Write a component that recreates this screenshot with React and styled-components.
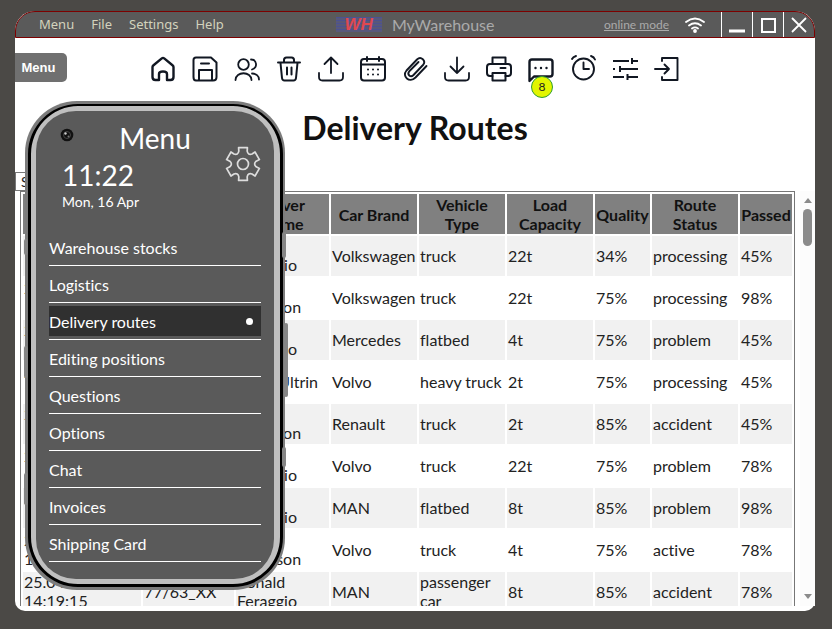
import React from 'react';
import styled, { createGlobalStyle } from 'styled-components';

const GlobalStyle = createGlobalStyle`
  *, *::before, *::after { box-sizing: border-box; }
  body {
    margin: 0;
    background: #4b4946;
    color: #222;
    font: 16px/19px Lato, sans-serif;
    font-variant-ligatures: none;
  }
  button { font: inherit; color: inherit; }
`;

const Desktop = styled.div`
  display: flex;
  height: 100vh;
  padding: 11px 17px 18px 15px;
`;

const Window = styled.main`
  position: relative;
  flex: 1;
  min-width: 0;
  display: flex;
  flex-direction: column;
  padding-bottom: 5px;
  background: #fff;
  border-radius: 20px 20px 10px 10px;
`;

const TitleBar = styled.header`
  display: grid;
  grid-template-columns: 1fr auto 1fr;
  align-items: center;
  height: 27px;
  flex: none;
  background: #5a5a5a;
  border: 1px solid #7d0000;
  border-radius: 20px 20px 0 0;
  overflow: hidden;
`;

const MenuBar = styled.nav`
  display: flex;
  gap: 17px;
  padding: 0 0 2px 23px;
`;

const MenuBarButton = styled.button`
  padding: 0;
  border: 0;
  background: none;
  color: #d3d3bd;
  font: 13px/20px "Noto Sans", sans-serif;
`;

const Brand = styled.div`
  display: flex;
  align-items: center;
  gap: 10px;
  color: #aaa;
`;

const TitleTools = styled.div`
  display: flex;
  align-items: center;
  justify-content: flex-end;
  height: 100%;
`;

const ModeLink = styled.a`
  margin-right: 16px;
  color: #aaa;
  font-size: 12px;
`;

const WifiIcon = styled.svg`
  width: 20px;
  height: 16px;
  margin-right: 16px;
`;

const WindowButton = styled.button`
  display: grid;
  place-items: center;
  width: 31px;
  height: 100%;
  padding: 0;
  border: 0;
  border-left: 1px solid #fff;
  background: none;
`;

const ToolRow = styled.div`
  display: grid;
  grid-template-columns: 1fr auto 1fr;
  flex: none;
  align-items: center;
  height: 59px;
`;

const MenuToggle = styled.button`
  justify-self: start;
  width: 52px;
  height: 29px;
  padding: 0 5px 0 0;
  border: 0;
  border-radius: 0 5px 5px 0;
  background: #707070;
  color: #fff;
  font: bold 13px/16px "Liberation Sans", sans-serif;
  text-align: center;
`;

const Tools = styled.div`
  display: flex;
  gap: 14px;
  padding-top: 2px;
`;

const ToolButton = styled.button`
  position: relative;
  width: 28px;
  height: 28px;
  padding: 0;
  border: 0;
  background: none;
  svg { display: block; }
`;

const Badge = styled.span`
  position: absolute;
  left: 4px;
  top: 21px;
  width: 22px;
  height: 22px;
  border: 1px solid #2f9e2f;
  border-radius: 50%;
  background: #e2f500;
  font-size: 12px;
  line-height: 20px;
  text-align: center;
`;

const Title = styled.h1`
  flex: none;
  margin: 11px 0 24px;
  color: #111;
  font-size: 32px;
  line-height: 40px;
  text-align: center;
`;

const FilterButton = styled.button`
  flex: none;
  align-self: flex-start;
  width: 50px;
  height: 19px;
  padding: 0 5px;
  border: 1px solid #777;
  background: #fff;
  font-size: 14px;
  line-height: 16px;
  text-align: left;
`;

const ScrollArea = styled.section`
  display: flex;
  flex: 1;
  min-height: 0;
`;

const TableView = styled.div`
  flex: 1;
  min-width: 0;
  padding: 0 5px;
  overflow: auto;
  scrollbar-width: none;
`;

const RoutesTable = styled.table`
  width: 100%;
  table-layout: fixed;
  border: 1px solid #777;
  border-spacing: 2px;
`;

const HeadCell = styled.th`
  height: 40px;
  padding: 1px 0;
  background: #808080;
  color: #111;
  font-weight: bold;
  white-space: pre-line;
`;

const Row = styled.tr`
  background: ${(p) => (p.$shaded ? '#f1f1f1' : '#fff')};
`;

const Cell = styled.td`
  height: 40px;
  padding: 0 1px 2px;
`;

const ScrollTrack = styled.div`
  display: flex;
  flex-direction: column;
  align-items: center;
  width: 15px;
  padding: 6px 0;
  background: #fcfcfc;
`;

const ScrollThumb = styled.div`
  width: 9px;
  height: 37px;
  margin: 6px 0 auto;
  border-radius: 5px;
  background: #8b8b8b;
`;

const Phone = styled.aside`
  position: absolute;
  left: 10px;
  top: 90px;
  width: 260px;
  padding: 3px 2px 3px 3px;
  border-radius: 52px;
  background: #7c7c7c;
`;

const SideKey = styled.span`
  position: absolute;
  ${(p) => p.$side}: -${(p) => p.$depth}px;
  top: ${(p) => p.$top}px;
  width: 4px;
  height: ${(p) => p.$length}px;
  border-radius: 3px;
  background: #858585;
`;

const PhoneBody = styled.div`
  display: flex;
  flex-direction: column;
  border: 3px solid #000;
  border-top-width: 2px;
  border-radius: 50px;
  background: #bfbfbf;
  padding: 5px 6px 5px 5px;
`;

const Screen = styled.div`
  height: 468px;
  padding: 9px 13px 0;
  border-radius: 40px;
  background: #5a5a5a;
  color: #fff;
`;

const PhoneHead = styled.div`
  display: grid;
  grid-template: 36px 1fr / 36px 1fr 36px;
  height: 109px;
`;

const Camera = styled.svg`
  width: 14px;
  height: 14px;
  margin: 8px 0 0 11px;
`;

const PhoneTitle = styled.h2`
  margin: 0;
  font-size: 28px;
  font-weight: normal;
  line-height: 36px;
  text-align: center;
`;

const Clock = styled.div`
  grid-column: 1 / 3;
  padding-left: 13px;
`;

const Time = styled.div`
  font-size: 28px;
  line-height: 38px;
`;

const DateLine = styled.div`
  font-size: 14px;
  line-height: 16px;
`;

const SettingsButton = styled.button`
  grid-column: 3;
  grid-row: 1 / 3;
  align-self: start;
  width: 36px;
  height: 36px;
  margin-top: 26px;
  padding: 0;
  border: 0;
  background: none;
`;

const NavList = styled.nav`
  display: flex;
  flex-direction: column;
`;

const NavLink = styled.a`
  display: block;
  padding: 3px 0;
  border-bottom: 1px solid #fff;
  color: #fff;
  text-decoration: none;
`;

const NavLabel = styled.span`
  display: flex;
  align-items: center;
  justify-content: space-between;
  height: 30px;
  padding-right: 8px;
  background: ${(p) => (p.$active ? '#303030' : 'transparent')};
`;

const ActiveDot = styled.i`
  width: 7px;
  height: 7px;
  border-radius: 50%;
  background: #fff;
`;

const tools = [
  ['Home', 2.4, <path d="M3.5 12v10q0 3 3 3H10v-6q0-2.500 4-2.500t4 2.500v6h3.500q3 0 3-3V12q0-1-1-1.800L15.200 3.400q-1.200-1-2.400 0L4.500 10.200q-1 .8-1 1.800Z" />],
  ['Save', 2, <><path d="M5 2.500h15l5.500 5V22q0 3.500-3.500 3.500H5Q2.500 25.500 2.500 22V5Q2.500 2.500 5 2.500Z" /><path d="M10 8.500h8M8 25V15h13v10" /></>],
  ['Users', 1.8, <><circle cx="10.500" cy="9.500" r="5.300" /><path d="M18 4.500c6 0 7 8 1 10M2.500 25c0-9 16-9 16 0M19 18.500c4 0 7 2.500 7 6" /></>],
  ['Delete', 2, <><path d="M3 7.500h22M9 7.500V5q0-2.500 2.500-2.500h5Q19 2.500 19 5v2.500M5.500 8l1.500 15q.3 2.500 2.500 2.500h9q2.200 0 2.500-2.500l1.500-15M12 12.500v7M16.500 12.500v7" /></>],
  ['Upload', 1.8, <path d="M14 18V2.500M7.500 9 14 2.500 20.500 9M2 18v4q0 3.500 3.500 3.500h17q3.500 0 3.500-3.500v-4" />],
  ['Calendar', 2, <><rect x="2" y="4" width="24" height="21.500" rx="3" /><path d="M2 9.500h24M8 2v4M20 2v4" /><path d="M9 14.500h.01M14 14.500h.01M19 14.500h.01M9 19.500h.01M14 19.500h.01M19 19.500h.01" /></>],
  ['Attach', 1.9, <path d="m25.500 11-11 11.500c-6 6-14-1-9-7L16 4.500c4-4 9.500 1.500 6 5.500L12.500 20c-3 3-7-.5-4-4L17.500 7" />],
  ['Download', 1.8, <path d="M14 2.500V18M7.500 11.500 14 18l6.500-6.500M2 18v4q0 3.500 3.500 3.500h17q3.500 0 3.500-3.500v-4" />],
  ['Print', 2, <><path d="M7.500 9V2.500h13V9M7.500 21H5q-3 0-3-3v-6q0-3 3-3h18q3 0 3 3v6q0 3-3 3h-2.500M15.500 13h5" /><path d="M7.500 18h13v7.500h-13Z" /></>],
  ['Messages', 2.4, <><path d="M2.500 26V7q0-2.500 2.500-2.500h18q2.500 0 2.500 2.500v12q0 2.500-2.500 2.500H7Z" /><path d="M8.500 13h.01M14 13h.01M19.500 13h.01" /></>],
  ['Alarm', 1.9, <><circle cx="14.500" cy="14" r="10.500" /><path d="M14.500 7.500V14H20M3 4q1-2 4-3M22 1q3 1 4 3.500" /></>],
  ['Filters', 2, <path strokeLinecap="butt" d="M2 6h16M21 6h6M21 3v6M2 14h2M8 14h19M9 11v6M2 22h11M16 22h11M16.500 19v6" />],
  ['Log in', 1.9, <path d="M9 6V3h15.500v22H9v-3M2 14h14M11.500 9.500 16 14l-4.500 4.500" />],
];

const columns = [
  ['Date', 118], ['Number', 91], ['Driver\nName', 93], ['Car Brand', 86],
  ['Vehicle\nType', 86], ['Load\nCapacity', 86], ['Quality', 55],
  ['Route\nStatus', 86], ['Passed', 52],
];

const when = '25.04.2024 14:19:15';
const plate = '77/63_XX';
const routes = [
  [when, plate, 'Ronald Feraggio', 'Volkswagen', 'truck', '22t', '34%', 'processing', '45%'],
  [when, plate, 'Mark Morrison', 'Volkswagen', 'truck', '22t', '75%', 'processing', '98%'],
  [when, plate, 'Ronald Feraggio', 'Mercedes', 'flatbed', '4t', '75%', 'problem', '45%'],
  [when, plate, 'Peter Ultrin', 'Volvo', 'heavy truck', '2t', '75%', 'processing', '45%'],
  [when, plate, 'Mark Morrison', 'Renault', 'truck', '2t', '85%', 'accident', '45%'],
  [when, plate, 'Ronald Feraggio', 'Volvo', 'truck', '22t', '75%', 'problem', '78%'],
  [when, plate, 'Ronald Feraggio', 'MAN', 'flatbed', '8t', '85%', 'problem', '98%'],
  [when, plate, 'Mark Morrison', 'Volvo', 'truck', '4t', '75%', 'active', '78%'],
  [when, plate, 'Ronald Feraggio', 'MAN', 'passenger car', '8t', '85%', 'accident', '78%'],
];

const sections = [
  'Warehouse stocks', 'Logistics', 'Delivery routes', 'Editing positions',
  'Questions', 'Options', 'Chat', 'Invoices', 'Shipping Card',
];

const LogoMark = styled.span`
  padding: 0 9px;
  background: repeating-linear-gradient(#4b5291 0 1px, #58587a 1px 3px);
  color: #e04850;
  font: italic bold 17px/15px "Liberation Sans", sans-serif;
`;

function Arrow({ down }) {
  return (
    <svg width="8" height="6" viewBox="0 0 8 6" aria-hidden="true">
      <path fill="#8b8b8b" d={down ? 'M0 0h8L4 5Z' : 'M0 6h8L4 1Z'} />
    </svg>
  );
}

function GearIcon() {
  const at = (angle, radius) => {
    const turn = ((angle - 90) * Math.PI) / 180;
    return `${(18 + radius * Math.cos(turn)).toFixed(2)} ${(18 + radius * Math.sin(turn)).toFixed(2)}`;
  };
  const teeth = [0, 60, 120, 180, 240, 300].map((a) => (
    `${a ? 'L' : 'M'}${at(a - 15, 17)}L${at(a + 15, 17)}L${at(a + 18, 13.5)}Q${at(a + 30, 10)} ${at(a + 42, 13.5)}`
  ));
  return (
    <svg width="36" height="36" viewBox="0 0 36 36" fill="none" stroke="#ddd" strokeWidth="1.7" strokeLinejoin="round" aria-hidden="true">
      <path d={`${teeth.join('')}Z`} />
      <circle cx="18" cy="18" r="5.500" />
    </svg>
  );
}

function PhoneMenu() {
  return (
    <Phone>
      <SideKey $side="right" $depth={1} $top={131} $length={26} />
      <SideKey $side="right" $depth={3} $top={222} $length={74} />
      <SideKey $side="right" $depth={1} $top={346} $length={20} />
      <SideKey $side="left" $depth={1} $top={138} $length={16} />
      <SideKey $side="left" $depth={1} $top={245} $length={32} />
      <SideKey $side="left" $depth={1} $top={372} $length={32} />
      <PhoneBody>
        <Screen>
          <PhoneHead>
            <Camera viewBox="0 0 14 14" aria-hidden="true">
              <circle cx="7" cy="7" r="6.300" fill="#111" />
              <circle cx="7" cy="7" r="3.500" fill="none" stroke="#444" />
              <circle cx="5.500" cy="5.500" r="1.200" fill="#ccc" />
              <circle cx="8.500" cy="8.500" r="1" fill="#777" />
            </Camera>
            <PhoneTitle>Menu</PhoneTitle>
            <Clock>
              <Time>11:22</Time>
              <DateLine>Mon, 16 Apr</DateLine>
            </Clock>
            <SettingsButton aria-label="Settings"><GearIcon /></SettingsButton>
          </PhoneHead>
          <NavList>
            {sections.map((name) => (
              <NavLink href="#" key={name}>
                <NavLabel $active={name === 'Delivery routes'}>
                  {name}
                  {name === 'Delivery routes' && <ActiveDot />}
                </NavLabel>
              </NavLink>
            ))}
          </NavList>
        </Screen>
      </PhoneBody>
    </Phone>
  );
}

export default function App() {
  return (
    <Desktop>
      <GlobalStyle />
      <Window>
        <TitleBar>
          <MenuBar>
            {['Menu', 'File', 'Settings', 'Help'].map((name) => (
              <MenuBarButton key={name}>{name}</MenuBarButton>
            ))}
          </MenuBar>
          <Brand>
            <LogoMark>WH</LogoMark>
            MyWarehouse
          </Brand>
          <TitleTools>
            <ModeLink href="#">online mode</ModeLink>
            <WifiIcon viewBox="0 0 20 16" fill="none" stroke="#fff" strokeWidth="1.800" strokeLinecap="round" aria-hidden="true">
              <path d="M1 5q9-7 18 0M4 8.500q6-4.500 12 0M7 11.500q3-2.200 6 0" />
              <circle cx="10" cy="14" r="1" fill="#fff" />
            </WifiIcon>
            <WindowButton aria-label="Minimize">
              <svg width="18" height="18"><path d="M1 15h16" stroke="#fff" strokeWidth="3" /></svg>
            </WindowButton>
            <WindowButton aria-label="Maximize">
              <svg width="16" height="16"><rect x="2" y="2" width="13" height="13" fill="none" stroke="#fff" strokeWidth="2" /></svg>
            </WindowButton>
            <WindowButton aria-label="Close">
              <svg width="16" height="16"><path d="m1 1 14 14M15 1 1 15" stroke="#fff" strokeWidth="1.800" /></svg>
            </WindowButton>
          </TitleTools>
        </TitleBar>
        <ToolRow>
          <MenuToggle>Menu</MenuToggle>
          <Tools>
            {tools.map(([name, weight, shape]) => (
              <ToolButton key={name} aria-label={name}>
                <svg width="28" height="28" viewBox="0 0 28 28" fill="none" stroke="#111722" strokeWidth={weight} strokeLinecap="round" strokeLinejoin="round" aria-hidden="true">
                  {shape}
                </svg>
                {name === 'Messages' && <Badge>8</Badge>}
              </ToolButton>
            ))}
          </Tools>
        </ToolRow>
        <Title>Delivery Routes</Title>
        <FilterButton>S</FilterButton>
        <ScrollArea>
          <TableView>
            <RoutesTable>
              <colgroup>
                {columns.map(([name, width]) => <col key={name} width={width} />)}
              </colgroup>
              <thead>
                <tr>{columns.map(([name]) => <HeadCell key={name} scope="col">{name}</HeadCell>)}</tr>
              </thead>
              <tbody>
                {routes.map((route, index) => (
                  <Row key={index} $shaded={index % 2 === 0}>
                    {route.map((value, column) => <Cell key={columns[column][0]}>{value}</Cell>)}
                  </Row>
                ))}
              </tbody>
            </RoutesTable>
          </TableView>
          <ScrollTrack>
            <Arrow />
            <ScrollThumb />
            <Arrow down />
          </ScrollTrack>
        </ScrollArea>
        <PhoneMenu />
      </Window>
    </Desktop>
  );
}
